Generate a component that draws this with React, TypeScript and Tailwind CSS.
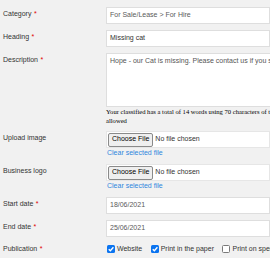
import React from "react";

const Req = () => <span className="text-[#e00000] ml-[2.5px]">*</span>;

function Label({ text, req }: { text: string; req?: boolean }) {
  return (
    <div className="w-[106px] shrink-0 pl-[3px] leading-[14px]">
      {text}
      {req && <Req />}
    </div>
  );
}

function Box({ children, dim }: { children: React.ReactNode; dim?: boolean }) {
  return (
    <div
      className={
        "h-[17px] w-[240px] bg-white border border-[#dedede] pl-[3px] flex items-center whitespace-nowrap " +
        (dim ? "text-[#5a5a5a]" : "text-[#333]")
      }
    >
      {children}
    </div>
  );
}

function FileField() {
  return (
    <div className="w-[240px]">
      <div className="h-[17px] bg-white border border-[#e6e6e6] pl-[1px] flex items-center">
        <span className="h-[14px] px-[3px] flex items-center bg-[#efefef] border border-[#8a8a8a] rounded-[2px] text-black whitespace-nowrap">
          Choose File
        </span>
        <span className="ml-[2px] text-[#333] whitespace-nowrap">No file chosen</span>
      </div>
      <div className="pl-[1px] leading-[9px] text-[#2f86dd]">Clear selected file</div>
    </div>
  );
}

function Check({ checked, label }: { checked: boolean; label: string }) {
  return (
    <div className="flex items-center whitespace-nowrap">
      {checked ? (
        <span className="w-[8px] h-[8px] rounded-[1.5px] bg-[#0b74f0] flex items-center justify-center">
          <svg viewBox="0 0 10 10" className="w-[8px] h-[8px]">
            <path d="M2.2 5.2 L4.2 7.2 L8 2.8" stroke="white" strokeWidth="1.7" fill="none" />
          </svg>
        </span>
      ) : (
        <span className="w-[8px] h-[8px] rounded-[1.5px] bg-white border border-[#7a7a7a]" />
      )}
      <span className="ml-[2px] text-[#333]">{label}</span>
    </div>
  );
}

export default function App() {
  return (
    <div className="w-[270px] h-[258px] overflow-hidden bg-[#f1f1f1] font-['Liberation_Sans',Arial,sans-serif] text-[7px] text-[#333] pt-[7px]">
      <div className="flex mb-[6px]">
        <Label text="Category" req />
        <Box dim>For Sale/Lease &gt; For Hire</Box>
      </div>
      <div className="flex mb-[6px]">
        <Label text="Heading" req />
        <Box>Missing cat</Box>
      </div>
      <div className="flex mb-[6px]">
        <Label text="Description" req />
        <div className="w-[240px] shrink-0">
          <div className="h-[54px] bg-white border border-[#dedede] pl-[3px] pt-[2px] leading-[9px] text-[#555] whitespace-nowrap">
            Hope - our Cat is missing. Please contact us if you see her.
          </div>
          <div className="pt-[1px] leading-[8.5px] font-['Liberation_Serif','Times_New_Roman',serif] text-[6.6px] text-black whitespace-nowrap">
            Your classified has a total of 14 words using 70 characters of the 1000 characters
            <br />
            allowed
          </div>
        </div>
      </div>
      <div className="flex mb-[7px]">
        <Label text="Upload image" />
        <FileField />
      </div>
      <div className="flex mb-[7px]">
        <Label text="Business logo" />
        <FileField />
      </div>
      <div className="flex mb-[6px]">
        <Label text="Start date" req />
        <Box dim>18/06/2021</Box>
      </div>
      <div className="flex mb-[6px]">
        <Label text="End date" req />
        <Box dim>25/06/2021</Box>
      </div>
      <div className="flex items-center h-[12px]">
        <div className="w-[106px] shrink-0 pl-[3px]">
          Publication
          <Req />
        </div>
        <div className="flex items-center gap-[8.5px] pl-[1px]">
          <Check checked label="Website" />
          <Check checked label="Print in the paper" />
          <Check checked={false} label="Print on special pages" />
        </div>
      </div>
    </div>
  );
}
